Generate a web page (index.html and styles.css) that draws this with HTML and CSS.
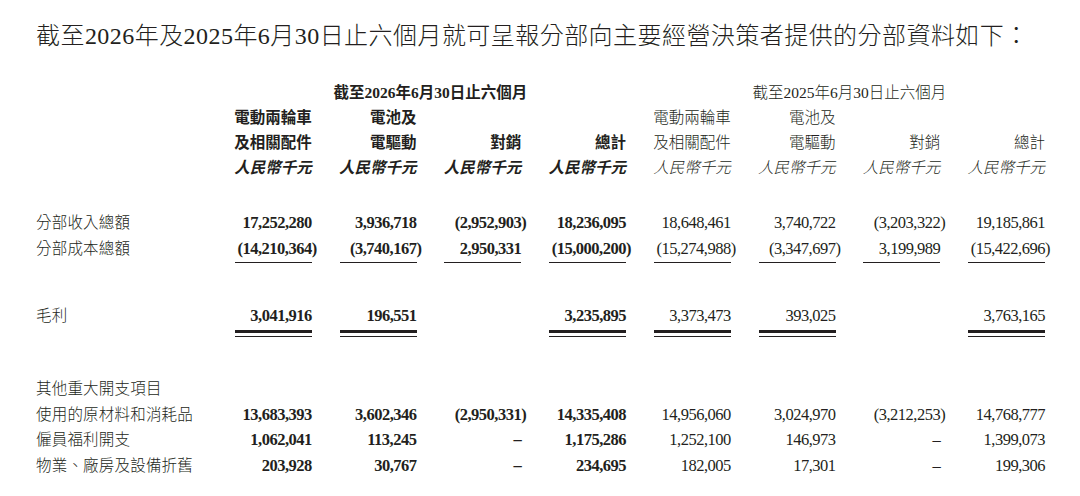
FILE: index.html
```html
<!DOCTYPE html>
<html lang="zh-Hant">
<head>
<meta charset="utf-8">
<title>分部資料</title>
<link rel="stylesheet" href="styles.css">
</head>
<body>
<div class="page">
  <p class="title">截至2026年及2025年6月30日止六個月就可呈報分部向主要經營決策者提供的分部資料如下：</p>
  <div class="table">
    <div class="row period">
      <div></div>
      <div class="span b">截至2026年6月30日止六個月</div>
      <div class="span">截至2025年6月30日止六個月</div>
    </div>
    <div class="row head">
      <div></div>
      <div>電動兩輪車</div><div>電池及</div><div></div><div></div>
      <div>電動兩輪車</div><div>電池及</div><div></div><div></div>
    </div>
    <div class="row head">
      <div></div>
      <div>及相關配件</div><div>電驅動</div><div>對銷</div><div>總計</div>
      <div>及相關配件</div><div>電驅動</div><div>對銷</div><div>總計</div>
    </div>
    <div class="row head unit">
      <div></div>
      <div>人民幣千元</div><div>人民幣千元</div><div>人民幣千元</div><div>人民幣千元</div>
      <div>人民幣千元</div><div>人民幣千元</div><div>人民幣千元</div><div>人民幣千元</div>
    </div>

    <div class="row data first">
      <div>分部收入總額</div>
      <div>17,252,280</div><div>3,936,718</div><div>(2,952,903<span class="cp">)</span></div><div>18,236,095</div>
      <div>18,648,461</div><div>3,740,722</div><div>(3,203,322<span class="cp">)</span></div><div>19,185,861</div>
    </div>
    <div class="row data">
      <div>分部成本總額</div>
      <div>(14,210,364<span class="cp">)</span></div><div>(3,740,167<span class="cp">)</span></div><div>2,950,331</div><div>(15,000,200<span class="cp">)</span></div>
      <div>(15,274,988<span class="cp">)</span></div><div>(3,347,697<span class="cp">)</span></div><div>3,199,989</div><div>(15,422,696<span class="cp">)</span></div>
    </div>
    <div class="row rule">
      <div></div>
      <div class="ln"></div><div class="ln"></div><div class="ln"></div><div class="ln"></div>
      <div class="ln"></div><div class="ln"></div><div class="ln"></div><div class="ln"></div>
    </div>

    <div class="row data gross">
      <div>毛利</div>
      <div>3,041,916</div><div>196,551</div><div></div><div>3,235,895</div>
      <div>3,373,473</div><div>393,025</div><div></div><div>3,763,165</div>
    </div>
    <div class="row rule double">
      <div></div>
      <div class="dbl"></div><div class="dbl"></div><div></div><div class="dbl"></div>
      <div class="dbl"></div><div class="dbl"></div><div></div><div class="dbl"></div>
    </div>

    <div class="row data other">
      <div>其他重大開支項目</div>
      <div></div><div></div><div></div><div></div>
      <div></div><div></div><div></div><div></div>
    </div>
    <div class="row data tight">
      <div>使用的原材料和消耗品</div>
      <div>13,683,393</div><div>3,602,346</div><div>(2,950,331<span class="cp">)</span></div><div>14,335,408</div>
      <div>14,956,060</div><div>3,024,970</div><div>(3,212,253<span class="cp">)</span></div><div>14,768,777</div>
    </div>
    <div class="row data tight">
      <div>僱員福利開支</div>
      <div>1,062,041</div><div>113,245</div><div>–</div><div>1,175,286</div>
      <div>1,252,100</div><div>146,973</div><div>–</div><div>1,399,073</div>
    </div>
    <div class="row data tight">
      <div>物業、廠房及設備折舊</div>
      <div>203,928</div><div>30,767</div><div>–</div><div>234,695</div>
      <div>182,005</div><div>17,301</div><div>–</div><div>199,306</div>
    </div>
  </div>
</div>
</body>
</html>
```
FILE: styles.css
```css
* {
  box-sizing: border-box;
}

html, body {
  margin: 0;
  background: #ffffff;
}

body {
  color: #231f20;
  font-family: "Liberation Serif", "Noto Sans CJK TC", serif;
}

.page {
  width: 1080px;
  padding: 21px 0 0 36px;
}

.title {
  margin: 0;
  font-size: 24px;
  line-height: 30px;
  font-weight: 300;
  letter-spacing: 0.45px;
  white-space: nowrap;
}

.table {
  margin-top: 28.5px;
  font-size: 15.5px;
}

.row {
  display: grid;
  grid-template-columns: 171px repeat(8, 104.75px);
}

.row > * {
  white-space: nowrap;
}

/* period headings */
.period {
  line-height: 25.3px;
}

.period .span {
  grid-column: span 4;
  text-align: center;
  padding-left: 28px;
  font-weight: 300;
}

.period .span.b {
  font-weight: 700;
}

/* column headings */
.head {
  line-height: 25.3px;
  font-weight: 300;
}

.head > :not(:first-child) {
  text-align: right;
}

.head > :nth-child(n+2):nth-child(-n+5) {
  font-weight: 700;
}

.unit > * {
  font-style: italic;
}

/* data rows */
.data {
  line-height: 26px;
}

.data > :first-child {
  font-weight: 300;
  letter-spacing: 0.2px;
}

.data > :not(:first-child) {
  text-align: right;
  font-size: 16.5px;
  letter-spacing: -0.5px;
}

.data > :nth-child(n+2):nth-child(-n+5) {
  font-weight: 700;
}

.cp {
  margin-right: -5px;
}

.first {
  margin-top: 29.3px;
}

.gross {
  margin-top: 39.7px;
}

.other {
  margin-top: 39.5px;
}

.tight,
.other {
  line-height: 25.5px;
}

/* rules */
.rule {
  height: 1px;
}

.ln {
  justify-self: end;
  width: 77px;
  height: 1px;
  background: #231f20;
}

.double {
  height: 7px;
  margin-top: 1.3px;
}

.dbl {
  justify-self: end;
  width: 77px;
  height: 7px;
  border-top: 3px solid #231f20;
  border-bottom: 1px solid #231f20;
}
```
